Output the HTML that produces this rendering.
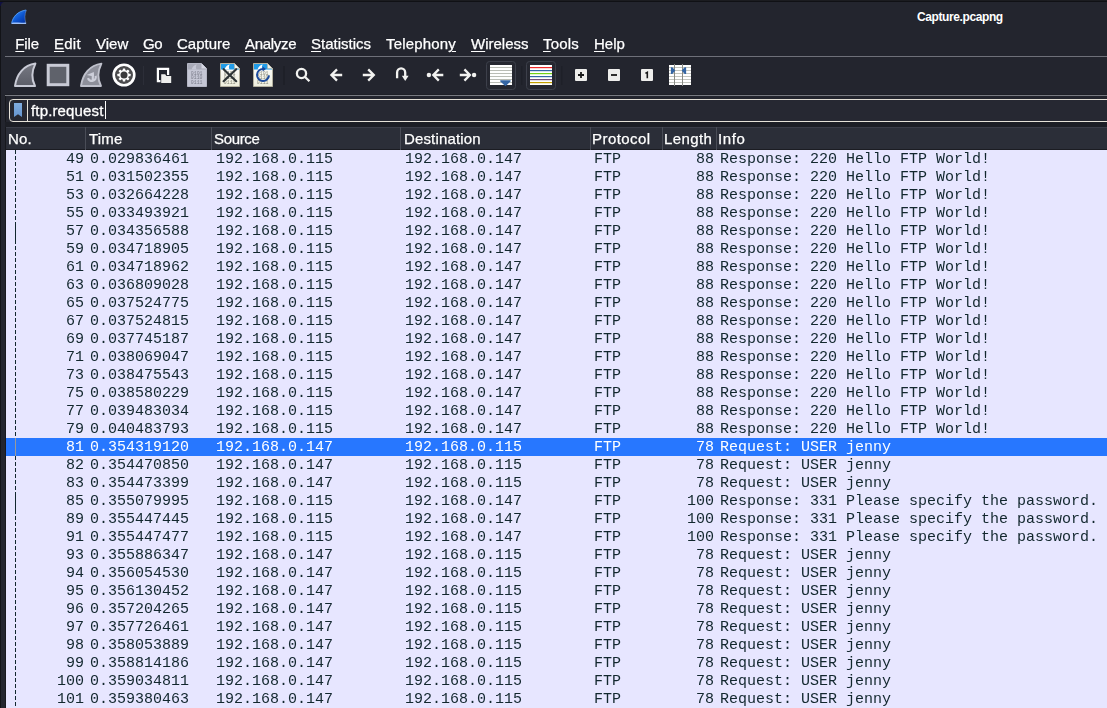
<!DOCTYPE html>
<html lang="en">
<head>
<meta charset="utf-8">
<title>Capture.pcapng</title>
<style>
html,body{margin:0;padding:0;}
body{width:1107px;height:708px;overflow:hidden;background:#23252e;position:relative;font-family:"Liberation Sans","DejaVu Sans",sans-serif;color:#fff;}
#menubar,#thead,#rows,#filter{will-change:transform;}
#win{position:absolute;left:0;top:0;width:1107px;height:708px;background:#23252e;overflow:hidden;}
#topedge{position:absolute;left:0;top:0;width:1107px;height:2px;background:linear-gradient(to bottom,#1b1c20 0,#1b1c20 1px,#101115 1px,#101115 2px);}
#corner{position:absolute;left:0;top:1px;width:5px;height:5px;background:radial-gradient(circle at 5px 5px,rgba(0,0,0,0) 0,rgba(0,0,0,0) 3.6px,#101040 4.6px,#101040 8px);}
#leftedge{position:absolute;left:0;top:0;width:1px;height:708px;background:#121317;}
#title{position:absolute;top:10px;left:917px;font-size:12px;font-weight:bold;color:#fff;white-space:nowrap;letter-spacing:-0.4px;}
#menubar{position:absolute;left:0;top:34px;height:20px;width:1107px;font-size:15px;white-space:nowrap;}
#menubar span{position:absolute;top:0;line-height:20px;-webkit-text-stroke:0.25px #fff;}
#menubar u{text-decoration:underline;text-decoration-thickness:1px;text-underline-offset:2px;}
.hline{position:absolute;left:5px;right:0;height:1px;}
#toolbar{position:absolute;left:0;top:0;width:1107px;height:98px;}
#toolbar svg{position:absolute;}
#filter{position:absolute;left:9px;top:99px;width:1110px;height:23px;border:1px solid #e6e2d8;border-radius:4px;box-sizing:border-box;background:#262832;}
#filter .bm{position:absolute;left:4px;top:3px;}
#filter .sep{position:absolute;left:17px;top:0;width:1px;height:21px;background:#e6e2d8;}
#filter .txt{position:absolute;left:21px;top:0;line-height:21px;font-size:15px;letter-spacing:0.15px;color:#fff;-webkit-text-stroke:0.3px #fff;}
#filter .caret{position:absolute;left:95px;top:1px;width:1px;height:18px;background:#fff;}
#thead{position:absolute;left:6px;top:127px;width:1101px;height:23px;background:#2b2e38;font-size:15px;box-sizing:border-box;border-top:1px solid #3a3d48;border-bottom:1px solid #1b1c22;}
#thead span{-webkit-text-stroke:0.25px #fff;position:absolute;top:-1px;letter-spacing:0.15px;line-height:23px;white-space:nowrap;}
#thead i{position:absolute;top:-1px;width:1px;height:23px;background:#4a4d57;}
#rows{position:absolute;left:6px;top:150px;width:1101px;height:558px;background:#e7e6ff;}
.row{position:relative;height:18px;width:1101px;font-family:"Liberation Mono","DejaVu Sans Mono",monospace;font-size:15px;line-height:18px;color:#12272e;white-space:nowrap;}
.row.sel{background:#2777ff;color:#fff;}
.row .c{position:absolute;top:1px;}
.row .rel{position:absolute;left:9px;top:0;height:18px;width:1px;background:repeating-linear-gradient(to bottom,#12272e 0,#12272e 4px,transparent 4px,transparent 6px);}
.row.solid .rel{background:#12272e;}
.row.sel .rel{background:#9a9a9a;}
.no{right:1023px;text-align:right;}
.tm{left:84px;}
.src{left:210px;}
.dst{left:399px;}
.pr{left:588px;}
.ln{right:393px;text-align:right;}
.inf{left:714px;}
</style>
</head>
<body>
<div id="win">
<div id="leftedge"></div><div id="corner"></div><div id="topedge"></div>
<svg id="logo" style="position:absolute;left:10px;top:8px" width="18" height="18" viewBox="0 0 18 18"><defs><linearGradient id="lg" x1="0.2" y1="0.1" x2="0.9" y2="0.9"><stop offset="0" stop-color="#2a84f8"/><stop offset="0.55" stop-color="#0b52cc"/><stop offset="1" stop-color="#0334a4"/></linearGradient></defs><path d="M1.4 15.8 C2.6 8.4 7.6 3 16.6 1.7 C14.6 6.2 14.4 11 16.2 15.8 Z" fill="url(#lg)"/><path d="M1.6 15.4 C2.8 8.6 7.6 3.4 16 2" fill="none" stroke="#5fa8ff" stroke-width="0.9" opacity="0.85"/><path d="M16.4 2 C14.6 6.2 14.4 11 16 15.4" fill="none" stroke="#8fa6c8" stroke-width="0.7" opacity="0.6"/><path d="M1.4 15.9 L2 14.8 C6 14.2 10 15.2 15.8 14.6 L16.2 15.9 Z" fill="#9ec0f7"/></svg>
<div id="title">Capture.pcapng</div>
<div id="menubar">
<span style="left:15.3px;letter-spacing:-0.15px"><u>F</u>ile</span>
<span style="left:54px;letter-spacing:0.25px"><u>E</u>dit</span>
<span style="left:96px"><u>V</u>iew</span>
<span style="left:143px;letter-spacing:-0.4px"><u>G</u>o</span>
<span style="left:177px"><u>C</u>apture</span>
<span style="left:245px;letter-spacing:-0.3px"><u>A</u>nalyze</span>
<span style="left:311px"><u>S</u>tatistics</span>
<span style="left:386px;letter-spacing:0.18px">Telephon<u>y</u></span>
<span style="left:471px"><u>W</u>ireless</span>
<span style="left:543px;letter-spacing:0.2px"><u>T</u>ools</span>
<span style="left:594px"><u>H</u>elp</span>
</div>
<div class="hline" style="top:56px;background:#6e7079"></div>
<div id="toolbar">
<svg style="position:absolute;left:0;top:0" width="1107" height="98" viewBox="0 0 1107 98">
<defs>
<linearGradient id="gfin" x1="0" y1="0" x2="0" y2="1"><stop offset="0" stop-color="#767882"/><stop offset="1" stop-color="#5c5e68"/></linearGradient>
<linearGradient id="gdoc" x1="0" y1="0" x2="0" y2="1"><stop offset="0" stop-color="#ffffff"/><stop offset="1" stop-color="#eeeedc"/></linearGradient>
<path id="finp" d="M1 23.5 C2.6 11.5 10 2.6 21.4 1.1 C18 8 16.8 15.5 21 23.5 Z"/>
<g id="docbits" font-family="Liberation Mono, monospace" font-size="4.9" letter-spacing="0">
<text x="3.8" y="12">0101</text><text x="3.8" y="16.4">0110</text><text x="3.8" y="20.9">0111</text>
</g>
</defs>
<!-- start capture fin -->
<g transform="translate(14,62.5)"><use href="#finp" fill="url(#gfin)" stroke="#c9cbd6" stroke-width="2" stroke-linejoin="round"/></g>
<!-- stop square -->
<rect x="48.2" y="65.3" width="19.6" height="19.4" fill="#5f626b" stroke="#c8cad5" stroke-width="3"/>
<!-- restart fin -->
<g transform="translate(80,62.5)"><use href="#finp" fill="#8e909b" stroke="#bfc1cc" stroke-width="1.9" stroke-linejoin="round"/>
<path d="M12.8 11 V17.6 M15.6 13.4 A3.9 3.9 0 1 1 8 15.6" fill="none" stroke="#cdcfda" stroke-width="2.2"/><path d="M6.6 12.6 L13.9 9.4 V14 Z" fill="#cdcfda"/></g>
<!-- options gear -->
<circle cx="124" cy="75" r="10.3" fill="#4b4b4d" stroke="#ffffff" stroke-width="2.6"/>
<g transform="translate(124,75)" fill="#ffffff">
<circle r="4.9"/>
<g id="teeth"><rect x="-1.25" y="-6.6" width="2.5" height="13.2" rx="0.5"/><rect x="-6.6" y="-1.25" width="13.2" height="2.5" rx="0.5"/></g>
<use href="#teeth" transform="rotate(45)"/>
<circle r="3.5" fill="#3a3a3c"/>
</g>
<!-- sep -->
<rect x="143" y="66" width="1" height="19" fill="#2c2e38"/>
<!-- open -->
<path d="M161 81.1 H157.9 V68.9 H168.1 V75" fill="none" stroke="#ffffff" stroke-width="2.2"/>
<path d="M161.2 74.2 H165.2 L166.4 76 H171.2 V83 H161.2 Z" fill="#eeeeec" stroke="#23252e" stroke-width="1.4" paint-order="stroke"/>
<!-- save disabled -->
<g transform="translate(187,63)">
<path d="M0.5 0.5 H14.5 L19.5 5.5 V23.5 H0.5 Z" fill="#c5c7d5" stroke="#b4b6c4" stroke-width="1"/>
<path d="M1 1 H14.3 L19 5.7 V6.4 H1 Z" fill="#a9abb9"/>
<path d="M14.5 0.5 V5.5 H19.5 Z" fill="#d5d7e3"/>
<path d="M4.6 6.6 C5.2 3.8 7.2 1.8 9.8 1.4 C8.6 3.2 8.6 5 9.8 6.6 Z" fill="#c5c7d5"/>
<use href="#docbits" fill="#7c7e8c"/>
</g>
<!-- close -->
<g transform="translate(220,63)">
<path d="M0.5 0.5 H14.5 L19.5 5.5 V23.5 H0.5 Z" fill="url(#gdoc)" stroke="#b3b09f" stroke-width="1"/>
<path d="M1 1 H14.3 L19 5.7 V6.4 H1 Z" fill="#219ce8"/>
<path d="M14.5 0.5 V5.5 H19.5 Z" fill="#f3f3ea" stroke="#b3b09f" stroke-width="0.6"/>
<path d="M4.6 6.6 C5.2 3.8 7.2 1.8 9.8 1.4 C8.6 3.2 8.6 5 9.8 6.6 Z" fill="#ffffff"/>
<use href="#docbits" fill="#88887a"/>
<path d="M3.6 6.2 L16.2 18.2 M16.2 6.2 L3.6 18.2" stroke="#2e3436" stroke-width="2.2" stroke-linecap="round"/>
</g>
<!-- reload -->
<g transform="translate(253,63)">
<path d="M0.5 0.5 H14.5 L19.5 5.5 V23.5 H0.5 Z" fill="url(#gdoc)" stroke="#b3b09f" stroke-width="1"/>
<path d="M1 1 H14.3 L19 5.7 V6.4 H1 Z" fill="#219ce8"/>
<path d="M14.5 0.5 V5.5 H19.5 Z" fill="#f3f3ea" stroke="#b3b09f" stroke-width="0.6"/>
<path d="M4.6 6.6 C5.2 3.8 7.2 1.8 9.8 1.4 C8.6 3.2 8.6 5 9.8 6.6 Z" fill="#ffffff"/>
<use href="#docbits" fill="#88887a"/>
<path d="M16 12.4 A6 6 0 1 1 10 5.9" fill="none" stroke="#1b4a9c" stroke-width="2"/>
<path d="M9.6 3.4 L13 5.9 L9.6 8.4 Z" fill="#1b4a9c"/>
</g>
<!-- sep -->
<rect x="283" y="66" width="2" height="19" fill="#1e2028"/>
<g fill="none" stroke="#f2f2f0" stroke-width="2.3">
<!-- search -->
<circle cx="301.5" cy="73.5" r="4.6"/><path d="M304.8 76.8 L309.4 81.3"/>
<!-- back -->
<path d="M342.2 75 H331.5 M337 69.4 L331.4 75 L337 80.6"/>
<!-- forward -->
<path d="M362.8 75 H373.6 M368.2 69.4 L373.8 75 L368.2 80.6"/>
<!-- goto -->
<path d="M397.1 78.2 V72.4 A4.05 4.05 0 0 1 405.2 72.4 V77"/>
<!-- first -->
<path d="M443.3 75 H433.6 M438.8 69.4 L433.3 75 L438.8 80.6"/>
<!-- last -->
<path d="M459.8 75 H469.6 M464.4 69.4 L469.9 75 L464.4 80.6"/>
</g>
<path d="M401.8 75.8 H408.6 L405.2 81 Z" fill="#f2f2f0"/>
<circle cx="428.9" cy="75" r="2.2" fill="#f2f2f0"/>
<circle cx="474.1" cy="75" r="2.2" fill="#f2f2f0"/>
<!-- autoscroll button -->
<rect x="486.5" y="61.5" width="29" height="28" rx="3" fill="#252730" stroke="#3d404b" stroke-width="1"/>
<rect x="490" y="65" width="22" height="20" fill="#ffffff"/>
<g fill="#babdb6"><rect x="490" y="67" width="22" height="1"/><rect x="490" y="70" width="22" height="1"/><rect x="490" y="73" width="22" height="1"/><rect x="490" y="76" width="22" height="1"/><rect x="490" y="79" width="22" height="1"/><rect x="490" y="82" width="22" height="1"/></g>
<path d="M500.6 80.3 H510.2 Q511.2 80.6 510.4 81.6 L505.5 86.2 L500.4 81.6 Q499.6 80.6 500.6 80.3 Z" fill="#3465a4"/>
<rect x="521" y="66" width="1.5" height="19" fill="#1e2028"/>
<!-- colorize button -->
<rect x="526.5" y="61.5" width="29" height="28" rx="3" fill="#252730" stroke="#3d404b" stroke-width="1"/>
<rect x="530" y="65" width="22" height="20" fill="#ffffff"/>
<rect x="530" y="67" width="22" height="1.2" fill="#ef2929"/><rect x="530" y="70" width="22" height="1.2" fill="#3465a4"/><rect x="530" y="73" width="22" height="1.2" fill="#73d216"/><rect x="530" y="76" width="22" height="1.2" fill="#3465a4"/><rect x="530" y="79" width="22" height="1.2" fill="#75507b"/><rect x="530" y="82" width="22" height="1.2" fill="#c4a000"/>
<rect x="561" y="66" width="1.5" height="19" fill="#1e2028"/>
<!-- zoom buttons -->
<g fill="#eeeeec"><rect x="575" y="69" width="12" height="12" rx="1"/><rect x="608" y="69" width="12" height="12" rx="1"/><rect x="641" y="69" width="12" height="12" rx="1"/></g>
<path d="M581 72 V78 M578 75 H584" stroke="#1a1a1a" stroke-width="1.8" fill="none"/>
<path d="M611 75 H617" stroke="#1a1a1a" stroke-width="1.8" fill="none"/>
<path d="M645.4 73.4 L647.3 72.3 V78.2" stroke="#1a1a1a" stroke-width="1.6" fill="none"/>
<!-- resize columns -->
<rect x="669" y="65" width="22" height="20" fill="#ffffff"/>
<g fill="#c3c5be"><rect x="669" y="67" width="22" height="1"/><rect x="669" y="70" width="22" height="1"/><rect x="669" y="73" width="22" height="1"/><rect x="669" y="76" width="22" height="1"/><rect x="669" y="79" width="22" height="1"/><rect x="669" y="82" width="22" height="1"/></g>
<rect x="674" y="64" width="1" height="22" fill="#888a85"/><rect x="682" y="64" width="1" height="22" fill="#888a85"/>
<path d="M670.9 67.2 H672.3 L675.3 70.6 L672.3 74 H670.9 Z" fill="#3465a4"/>
<path d="M686.1 67.2 H684.7 L681.7 70.6 L684.7 74 H686.1 Z" fill="#3465a4"/>
</svg>

</div>
<div class="hline" style="top:94px;background:#1e2027"></div>
<div class="hline" style="top:95px;background:#787a81"></div>
<div style="position:absolute;left:5px;top:96px;width:1px;height:612px;background:#17181d"></div>
<div id="filter"><svg class="bm" width="8" height="14" viewBox="0 0 8 14"><defs><linearGradient id="bmg" x1="0" y1="0" x2="0" y2="1"><stop offset="0" stop-color="#80addf"/><stop offset="1" stop-color="#6595d0"/></linearGradient></defs><path d="M0 0H8V14L4 11.2L0 14Z" fill="url(#bmg)"/></svg><div class="sep"></div><div class="txt">ftp.request</div><div class="caret"></div></div>
<div class="hline" style="top:122px;height:5px;background:#1c1e25"></div>
<div id="thead">
<span style="left:2px">No.</span><i style="left:79px"></i>
<span style="left:83px">Time</span><i style="left:205px"></i>
<span style="left:208px;letter-spacing:-0.35px">Source</span><i style="left:394px"></i>
<span style="left:398px">Destination</span><i style="left:584px"></i>
<span style="left:586px;letter-spacing:0.45px">Protocol</span><i style="left:656px"></i>
<span style="left:658px;letter-spacing:0.4px">Length</span><i style="left:710px"></i>
<span style="left:712px;letter-spacing:0.6px">Info</span>
</div>
<div id="rows">
<div class="row"><i class="rel"></i><span class="c no">49</span><span class="c tm">0.029836461</span><span class="c src">192.168.0.115</span><span class="c dst">192.168.0.147</span><span class="c pr">FTP</span><span class="c ln">88</span><span class="c inf">Response: 220 Hello FTP World!</span></div>
<div class="row"><i class="rel"></i><span class="c no">51</span><span class="c tm">0.031502355</span><span class="c src">192.168.0.115</span><span class="c dst">192.168.0.147</span><span class="c pr">FTP</span><span class="c ln">88</span><span class="c inf">Response: 220 Hello FTP World!</span></div>
<div class="row"><i class="rel"></i><span class="c no">53</span><span class="c tm">0.032664228</span><span class="c src">192.168.0.115</span><span class="c dst">192.168.0.147</span><span class="c pr">FTP</span><span class="c ln">88</span><span class="c inf">Response: 220 Hello FTP World!</span></div>
<div class="row"><i class="rel"></i><span class="c no">55</span><span class="c tm">0.033493921</span><span class="c src">192.168.0.115</span><span class="c dst">192.168.0.147</span><span class="c pr">FTP</span><span class="c ln">88</span><span class="c inf">Response: 220 Hello FTP World!</span></div>
<div class="row solid"><i class="rel"></i><span class="c no">57</span><span class="c tm">0.034356588</span><span class="c src">192.168.0.115</span><span class="c dst">192.168.0.147</span><span class="c pr">FTP</span><span class="c ln">88</span><span class="c inf">Response: 220 Hello FTP World!</span></div>
<div class="row"><i class="rel"></i><span class="c no">59</span><span class="c tm">0.034718905</span><span class="c src">192.168.0.115</span><span class="c dst">192.168.0.147</span><span class="c pr">FTP</span><span class="c ln">88</span><span class="c inf">Response: 220 Hello FTP World!</span></div>
<div class="row"><i class="rel"></i><span class="c no">61</span><span class="c tm">0.034718962</span><span class="c src">192.168.0.115</span><span class="c dst">192.168.0.147</span><span class="c pr">FTP</span><span class="c ln">88</span><span class="c inf">Response: 220 Hello FTP World!</span></div>
<div class="row"><i class="rel"></i><span class="c no">63</span><span class="c tm">0.036809028</span><span class="c src">192.168.0.115</span><span class="c dst">192.168.0.147</span><span class="c pr">FTP</span><span class="c ln">88</span><span class="c inf">Response: 220 Hello FTP World!</span></div>
<div class="row"><i class="rel"></i><span class="c no">65</span><span class="c tm">0.037524775</span><span class="c src">192.168.0.115</span><span class="c dst">192.168.0.147</span><span class="c pr">FTP</span><span class="c ln">88</span><span class="c inf">Response: 220 Hello FTP World!</span></div>
<div class="row"><i class="rel"></i><span class="c no">67</span><span class="c tm">0.037524815</span><span class="c src">192.168.0.115</span><span class="c dst">192.168.0.147</span><span class="c pr">FTP</span><span class="c ln">88</span><span class="c inf">Response: 220 Hello FTP World!</span></div>
<div class="row"><i class="rel"></i><span class="c no">69</span><span class="c tm">0.037745187</span><span class="c src">192.168.0.115</span><span class="c dst">192.168.0.147</span><span class="c pr">FTP</span><span class="c ln">88</span><span class="c inf">Response: 220 Hello FTP World!</span></div>
<div class="row"><i class="rel"></i><span class="c no">71</span><span class="c tm">0.038069047</span><span class="c src">192.168.0.115</span><span class="c dst">192.168.0.147</span><span class="c pr">FTP</span><span class="c ln">88</span><span class="c inf">Response: 220 Hello FTP World!</span></div>
<div class="row"><i class="rel"></i><span class="c no">73</span><span class="c tm">0.038475543</span><span class="c src">192.168.0.115</span><span class="c dst">192.168.0.147</span><span class="c pr">FTP</span><span class="c ln">88</span><span class="c inf">Response: 220 Hello FTP World!</span></div>
<div class="row"><i class="rel"></i><span class="c no">75</span><span class="c tm">0.038580229</span><span class="c src">192.168.0.115</span><span class="c dst">192.168.0.147</span><span class="c pr">FTP</span><span class="c ln">88</span><span class="c inf">Response: 220 Hello FTP World!</span></div>
<div class="row"><i class="rel"></i><span class="c no">77</span><span class="c tm">0.039483034</span><span class="c src">192.168.0.115</span><span class="c dst">192.168.0.147</span><span class="c pr">FTP</span><span class="c ln">88</span><span class="c inf">Response: 220 Hello FTP World!</span></div>
<div class="row"><i class="rel"></i><span class="c no">79</span><span class="c tm">0.040483793</span><span class="c src">192.168.0.115</span><span class="c dst">192.168.0.147</span><span class="c pr">FTP</span><span class="c ln">88</span><span class="c inf">Response: 220 Hello FTP World!</span></div>
<div class="row sel"><i class="rel"></i><span class="c no">81</span><span class="c tm">0.354319120</span><span class="c src">192.168.0.147</span><span class="c dst">192.168.0.115</span><span class="c pr">FTP</span><span class="c ln">78</span><span class="c inf">Request: USER jenny</span></div>
<div class="row"><i class="rel"></i><span class="c no">82</span><span class="c tm">0.354470850</span><span class="c src">192.168.0.147</span><span class="c dst">192.168.0.115</span><span class="c pr">FTP</span><span class="c ln">78</span><span class="c inf">Request: USER jenny</span></div>
<div class="row"><i class="rel"></i><span class="c no">83</span><span class="c tm">0.354473399</span><span class="c src">192.168.0.147</span><span class="c dst">192.168.0.115</span><span class="c pr">FTP</span><span class="c ln">78</span><span class="c inf">Request: USER jenny</span></div>
<div class="row solid"><i class="rel"></i><span class="c no">85</span><span class="c tm">0.355079995</span><span class="c src">192.168.0.115</span><span class="c dst">192.168.0.147</span><span class="c pr">FTP</span><span class="c ln">100</span><span class="c inf">Response: 331 Please specify the password.</span></div>
<div class="row"><i class="rel"></i><span class="c no">89</span><span class="c tm">0.355447445</span><span class="c src">192.168.0.115</span><span class="c dst">192.168.0.147</span><span class="c pr">FTP</span><span class="c ln">100</span><span class="c inf">Response: 331 Please specify the password.</span></div>
<div class="row"><i class="rel"></i><span class="c no">91</span><span class="c tm">0.355447477</span><span class="c src">192.168.0.115</span><span class="c dst">192.168.0.147</span><span class="c pr">FTP</span><span class="c ln">100</span><span class="c inf">Response: 331 Please specify the password.</span></div>
<div class="row"><i class="rel"></i><span class="c no">93</span><span class="c tm">0.355886347</span><span class="c src">192.168.0.147</span><span class="c dst">192.168.0.115</span><span class="c pr">FTP</span><span class="c ln">78</span><span class="c inf">Request: USER jenny</span></div>
<div class="row"><i class="rel"></i><span class="c no">94</span><span class="c tm">0.356054530</span><span class="c src">192.168.0.147</span><span class="c dst">192.168.0.115</span><span class="c pr">FTP</span><span class="c ln">78</span><span class="c inf">Request: USER jenny</span></div>
<div class="row"><i class="rel"></i><span class="c no">95</span><span class="c tm">0.356130452</span><span class="c src">192.168.0.147</span><span class="c dst">192.168.0.115</span><span class="c pr">FTP</span><span class="c ln">78</span><span class="c inf">Request: USER jenny</span></div>
<div class="row"><i class="rel"></i><span class="c no">96</span><span class="c tm">0.357204265</span><span class="c src">192.168.0.147</span><span class="c dst">192.168.0.115</span><span class="c pr">FTP</span><span class="c ln">78</span><span class="c inf">Request: USER jenny</span></div>
<div class="row"><i class="rel"></i><span class="c no">97</span><span class="c tm">0.357726461</span><span class="c src">192.168.0.147</span><span class="c dst">192.168.0.115</span><span class="c pr">FTP</span><span class="c ln">78</span><span class="c inf">Request: USER jenny</span></div>
<div class="row"><i class="rel"></i><span class="c no">98</span><span class="c tm">0.358053889</span><span class="c src">192.168.0.147</span><span class="c dst">192.168.0.115</span><span class="c pr">FTP</span><span class="c ln">78</span><span class="c inf">Request: USER jenny</span></div>
<div class="row"><i class="rel"></i><span class="c no">99</span><span class="c tm">0.358814186</span><span class="c src">192.168.0.147</span><span class="c dst">192.168.0.115</span><span class="c pr">FTP</span><span class="c ln">78</span><span class="c inf">Request: USER jenny</span></div>
<div class="row"><i class="rel"></i><span class="c no">100</span><span class="c tm">0.359034811</span><span class="c src">192.168.0.147</span><span class="c dst">192.168.0.115</span><span class="c pr">FTP</span><span class="c ln">78</span><span class="c inf">Request: USER jenny</span></div>
<div class="row"><i class="rel"></i><span class="c no">101</span><span class="c tm">0.359380463</span><span class="c src">192.168.0.147</span><span class="c dst">192.168.0.115</span><span class="c pr">FTP</span><span class="c ln">78</span><span class="c inf">Request: USER jenny</span></div>
</div>
</div>
</body>
</html>
